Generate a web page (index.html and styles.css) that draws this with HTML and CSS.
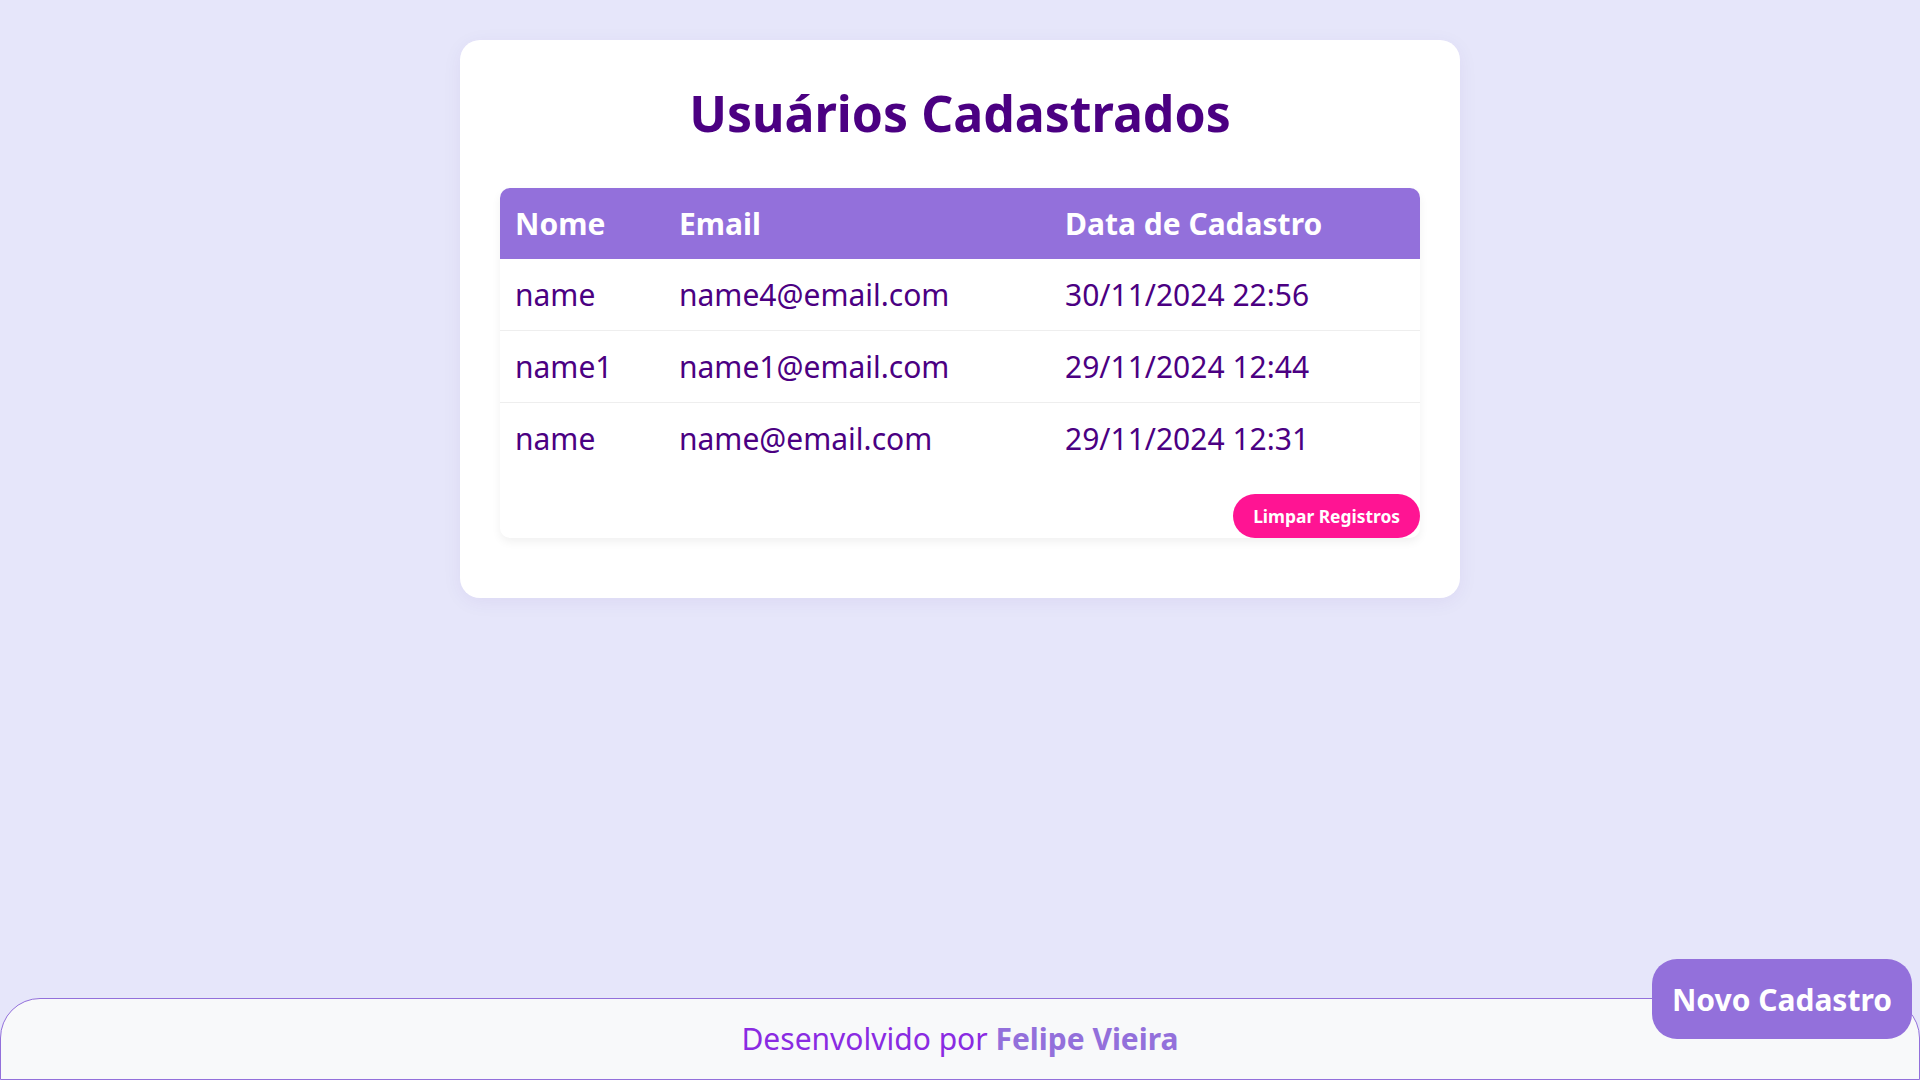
FILE: index.html
```html
<!DOCTYPE html>
<html lang="pt-BR">
<head>
<meta charset="UTF-8">
<title>Usuários Cadastrados</title>
<link rel="stylesheet" href="styles.css">
</head>
<body>
<main class="page">
  <section class="card">
    <h1 class="title">Usuários Cadastrados</h1>
    <div class="table-box">
      <table class="users">
        <colgroup>
          <col class="c-name">
          <col class="c-email">
          <col class="c-date">
        </colgroup>
        <thead>
          <tr><th>Nome</th><th>Email</th><th>Data de Cadastro</th></tr>
        </thead>
        <tbody>
          <tr><td>name</td><td>name4@email.com</td><td>30/11/2024 22:56</td></tr>
          <tr><td>name1</td><td>name1@email.com</td><td>29/11/2024 12:44</td></tr>
          <tr><td>name</td><td>name@email.com</td><td>29/11/2024 12:31</td></tr>
        </tbody>
      </table>
      <div class="actions">
        <button class="btn-clear">Limpar Registros</button>
      </div>
    </div>
  </section>
</main>
<footer class="footer">
  <p>Desenvolvido por <strong>Felipe Vieira</strong></p>
</footer>
<button class="btn-new">Novo Cadastro</button>
</body>
</html>
```
FILE: styles.css
```css
* { box-sizing: border-box; }

html, body { height: 100%; }

body {
  margin: 0;
  background: #e6e6fa;
  font-family: "Noto Sans", "Open Sans", sans-serif;
  color: #4b0082;
  display: flex;
  flex-direction: column;
  min-height: 100vh;
}

.page {
  flex: 1;
  padding-top: 40px;
}

.card {
  width: 1000px;
  margin: 0 auto;
  background: #ffffff;
  border-radius: 20px;
  padding: 40px 40px 60px;
  box-shadow: 0 4px 20px rgba(75, 0, 130, 0.06);
}

.title {
  margin: 0 0 41px;
  text-align: center;
  font-size: 50px;
  font-weight: 700;
  line-height: 67px;
  color: #4b0082;
}

.table-box {
  background: #ffffff;
  border-radius: 10px;
  box-shadow: 0 4px 10px rgba(0, 0, 0, 0.06);
}

.users {
  width: 100%;
  border-collapse: collapse;
  table-layout: fixed;
}

.c-name { width: 164px; }
.c-email { width: 386px; }
.c-date { width: 370px; }

.users th,
.users td {
  text-align: left;
  padding: 16px 15px;
  font-size: 30px;
  line-height: 39px;
}

.users thead th {
  background: #9370db;
  color: #ffffff;
  font-weight: 700;
}

.users thead th:first-child { border-top-left-radius: 10px; }
.users thead th:last-child { border-top-right-radius: 10px; }

.users tbody td {
  color: #4b0082;
  border-bottom: 1px solid #eeeeee;
}

.users tbody tr:last-child td { border-bottom: none; }

.actions {
  display: flex;
  justify-content: flex-end;
  margin-top: 20px;
}

.btn-clear {
  height: 44px;
  padding: 0 20px;
  border: none;
  border-radius: 22px;
  background: #ff1493;
  color: #ffffff;
  font-family: inherit;
  font-size: 17.4px;
  font-weight: 700;
}

.footer {
  width: 100%;
  background: #f8f9fa;
  border: 1px solid #9370db;
  border-radius: 40px 40px 0 0;
  padding: 20px 0;
  text-align: center;
}

.footer p {
  margin: 0;
  font-size: 30px;
  line-height: 40px;
  color: #8a2be2;
}

.footer strong {
  color: #9370db;
  font-weight: 700;
}

.btn-new {
  position: fixed;
  right: 8px;
  bottom: 41px;
  width: 260px;
  height: 80px;
  border: none;
  border-radius: 25px;
  background: #9370db;
  color: #ffffff;
  font-family: inherit;
  font-size: 30px;
  font-weight: 700;
}
```
